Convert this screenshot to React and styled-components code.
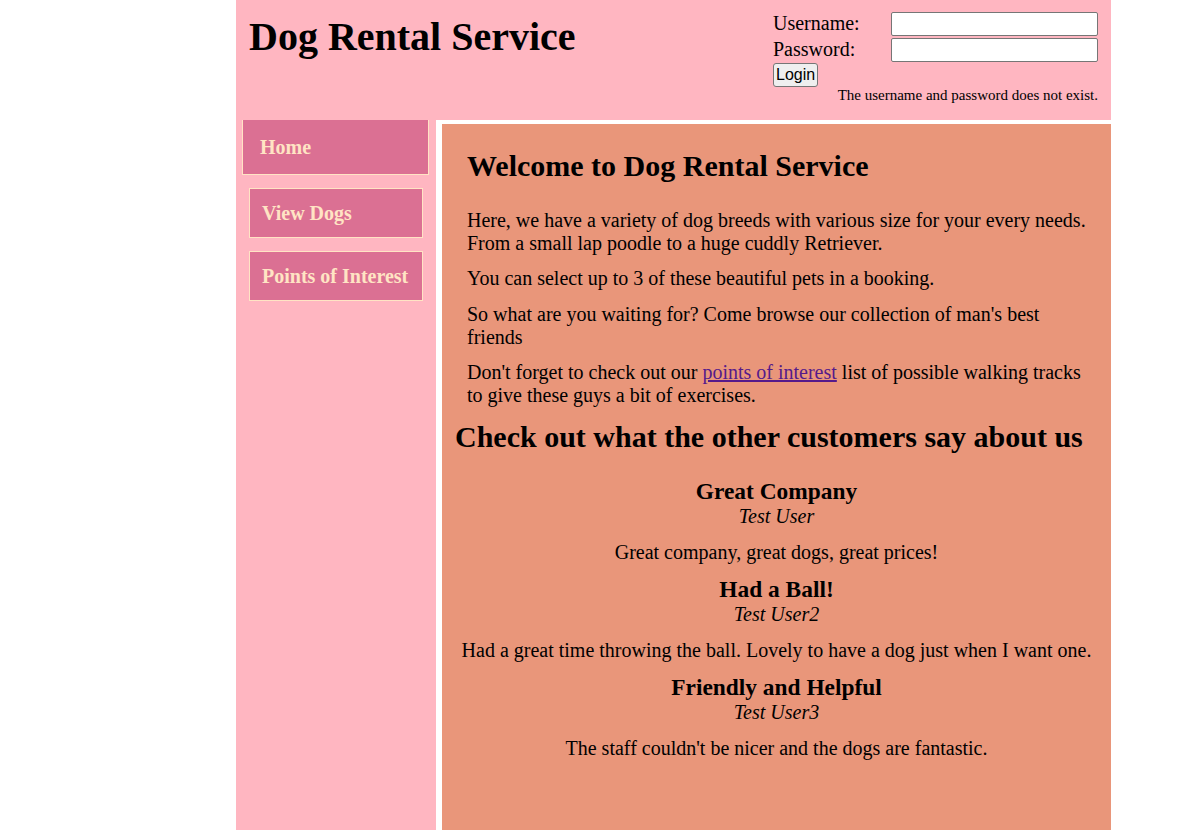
import React from "react";
import styled, { createGlobalStyle } from "styled-components";

const GlobalStyle = createGlobalStyle`
  body {
    margin: 0;
    background: #ffffff;
    font-family: "Liberation Serif", "Times New Roman", serif;
    font-size: 20px;
    line-height: 1.15;
    color: #000;
  }
`;

const reviews = [
  {
    title: "Great Company",
    user: "Test User",
    text: "Great company, great dogs, great prices!"
  },
  {
    title: "Had a Ball!",
    user: "Test User2",
    text: "Had a great time throwing the ball. Lovely to have a dog just when I want one."
  },
  {
    title: "Friendly and Helpful",
    user: "Test User3",
    text: "The staff couldn't be nicer and the dogs are fantastic."
  }
];

const navItems = [
  { label: "Home", active: true },
  { label: "View Dogs" },
  { label: "Points of Interest" }
];

export default function App() {
  return (
    <Page>
      <GlobalStyle />
      <Header>
        <Title>Dog Rental Service</Title>
        <LoginForm onSubmit={(e) => e.preventDefault()}>
          <Fields>
            <Label htmlFor="username">Username:</Label>
            <Input id="username" type="text" />
            <Label htmlFor="password">Password:</Label>
            <Input id="password" type="password" />
          </Fields>
          <LoginButton type="submit">Login</LoginButton>
          <ErrorText>The username and password does not exist.</ErrorText>
        </LoginForm>
      </Header>
      <Body>
        <Sidebar>
          {navItems.map((item) => (
            <NavItem key={item.label} href="#" $active={item.active}>
              {item.label}
            </NavItem>
          ))}
        </Sidebar>
        <Main>
          <Welcome>
            <Heading $top={25} $bottom={25}>Welcome to Dog Rental Service</Heading>
            <Para>
              Here, we have a variety of dog breeds with various size for your
              every needs. From a small lap poodle to a huge cuddly Retriever.
            </Para>
            <Para>You can select up to 3 of these beautiful pets in a booking.</Para>
            <Para>
              So what are you waiting for? Come browse our collection of man's
              best friends
            </Para>
            <Para>
              Don't forget to check out our <Link href="#">points of interest</Link>{" "}
              list of possible walking tracks to give these guys a bit of
              exercises.
            </Para>
          </Welcome>
          <Heading $top={13} $bottom={23}>
            Check out what the other customers say about us
          </Heading>
          <Reviews>
            {reviews.map((r) => (
              <Review key={r.title}>
                <ReviewTitle>{r.title}</ReviewTitle>
                <ReviewUser>{r.user}</ReviewUser>
                <ReviewText>{r.text}</ReviewText>
              </Review>
            ))}
          </Reviews>
        </Main>
      </Body>
    </Page>
  );
}

const Page = styled.div`
  width: 875px;
  margin-left: 236px;
  min-height: 100vh;
  display: flex;
  flex-direction: column;
`;

const Header = styled.header`
  height: 120px;
  box-sizing: border-box;
  padding: 12px 13px 0;
  background: #ffb6c1;
  display: flex;
  justify-content: space-between;
  align-items: flex-start;
`;

const Title = styled.h1`
  margin: 2px 0 0;
  font-size: 40px;
  font-weight: bold;
  line-height: 46px;
`;

const LoginForm = styled.form`
  width: 325px;
  display: flex;
  flex-direction: column;
  align-items: flex-start;
`;

const Fields = styled.div`
  display: grid;
  grid-template-columns: 118px 207px;
  grid-auto-rows: 24px;
  row-gap: 2px;
  align-items: center;
`;

const Label = styled.label`
  font-size: 20px;
  line-height: 23px;
  margin-top: -1px;
`;

const Input = styled.input`
  box-sizing: border-box;
  width: 207px;
  height: 24px;
  margin: 0;
  padding: 1px 2px;
  border: 1px solid #767676;
  border-radius: 2px;
  background: #fff;
`;

const LoginButton = styled.button`
  margin-top: 1px;
  height: 24px;
  padding: 0 2px;
  font-family: "Liberation Sans", Arial, sans-serif;
  font-size: 16px;
  color: #000;
  background: #efefef;
  border: 1px solid #767676;
  border-radius: 3px;
`;

const ErrorText = styled.div`
  align-self: stretch;
  text-align: right;
  font-size: 15px;
  line-height: 17px;
`;

const Body = styled.div`
  flex: 1;
  display: flex;
  align-items: stretch;
`;

const Sidebar = styled.nav`
  width: 200px;
  flex: none;
  box-sizing: border-box;
  padding: 0 13px;
  background: #ffb6c1;
  display: flex;
  flex-direction: column;
`;

const NavItem = styled.a`
  box-sizing: border-box;
  display: flex;
  align-items: center;
  height: ${(p) => (p.$active ? "55px" : "50px")};
  margin: ${(p) => (p.$active ? "0 -6px 0 -7px" : "13px 0 0")};
  padding-left: ${(p) => (p.$active ? "17px" : "12px")};
  padding-top: ${(p) => (p.$active ? "0" : "1px")};
  background: #db7093;
  border: 1px solid #ffe4c4;
  border-top-width: ${(p) => (p.$active ? "0" : "1px")};
  color: #ffe4c4;
  font-weight: bold;
  font-size: 20px;
  text-decoration: none;
`;

const Main = styled.main`
  flex: 1;
  display: flow-root;
  margin: 4px 0 0 6px;
  padding: 0 13px;
  background: #e9967a;
`;

const Welcome = styled.section`
  padding: 0 12px;
`;

const Heading = styled.h2`
  margin: ${(p) => p.$top}px 0 ${(p) => p.$bottom}px;
  font-size: 30px;
  line-height: 34.5px;
  font-weight: bold;
`;

const Para = styled.p`
  margin: 12.5px 0;
  line-height: 23px;
`;

const Link = styled.a`
  color: #551a8b;
  text-decoration: underline;
`;

const Reviews = styled.div`
  text-align: center;
`;

const Review = styled.div`
  display: flex;
  flex-direction: column;
  align-items: center;
`;

const ReviewTitle = styled.h3`
  margin: 0;
  font-size: 23.4px;
  line-height: 27px;
  font-weight: bold;
`;

const ReviewUser = styled.i`
  line-height: 23px;
`;

const ReviewText = styled.p`
  margin: 13px 0 12px;
  line-height: 23px;
`;
